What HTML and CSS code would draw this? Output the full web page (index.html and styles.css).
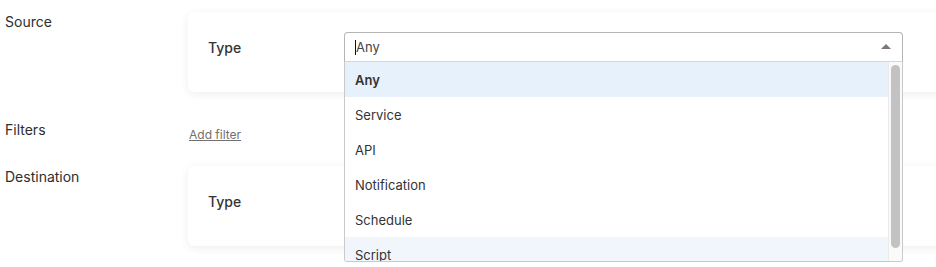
FILE: index.html
```html
<!DOCTYPE html>
<html lang="en">
<head>
    <meta charset="UTF-8">
    <title>Route editor</title>
    <link rel="stylesheet" href="styles.css">
</head>
<body>
    <div class="form">
        <div class="row row-source">
            <div class="row-label">Source</div>
            <div class="card">
                <div class="field">
                    <div class="field-label">Type</div>
                    <div class="combo">
                        <div class="combo-input">
                            <span class="caret"></span>Any
                            <span class="arrow"></span>
                        </div>
                        <div class="combo-menu">
                            <div class="combo-options">
                                <div class="option selected">Any</div>
                                <div class="option">Service</div>
                                <div class="option">API</div>
                                <div class="option">Notification</div>
                                <div class="option">Schedule</div>
                                <div class="option hover">Script</div>
                            </div>
                            <div class="scrollbar"><div class="thumb"></div></div>
                        </div>
                    </div>
                </div>
            </div>
        </div>

        <div class="row row-filters">
            <div class="row-label">Filters</div>
            <div class="row-body">
                <a class="add-link" href="#">Add filter</a>
            </div>
        </div>

        <div class="row row-destination">
            <div class="row-label">Destination</div>
            <div class="card">
                <div class="field">
                    <div class="field-label">Type</div>
                </div>
            </div>
        </div>
    </div>
</body>
</html>
```

FILE: styles.css
```css
* {
    margin: 0;
    padding: 0;
    box-sizing: border-box;
    font-family: 'Inter', 'Liberation Sans', sans-serif;
}

body {
    background-color: #ffffff;
    color: #2e2e2e;
    overflow: hidden;
    width: 936px;
    height: 267px;
}

.form {
    padding: 12px 0 0 5px;
}

.row {
    display: grid;
    grid-template-columns: 183px 780px;
}

.row-label {
    font-size: 14px;
    line-height: 20px;
    color: #2e2e2e;
}

.row-filters {
    margin-top: 28px;
}

.row-filters .row-body {
    padding-top: 4px;
    line-height: 18px;
}

.row-destination {
    margin-top: 23px;
}

.card {
    background: #ffffff;
    border-radius: 6px;
    box-shadow: 0 2px 10px rgba(0, 0, 0, 0.07);
    padding: 20px 20px 30px;
    height: 80px;
}

.row-destination .card {
    margin-top: -1px;
}

.field {
    display: flex;
    align-items: center;
    height: 30px;
}

.field-label {
    width: 136px;
    font-size: 14px;
    font-weight: 500;
    color: #333;
}

.combo {
    position: relative;
    width: 559px;
}

.combo-input {
    position: relative;
    height: 30px;
    border: 1px solid #b5b5b5;
    border-bottom-color: #d6d6d6;
    border-radius: 4px 4px 0 0;
    padding: 0 10px;
    font-size: 13px;
    line-height: 28px;
    color: #444;
    background: #fff;
}

.caret {
    display: inline-block;
    width: 1px;
    height: 15px;
    background: #111;
    vertical-align: -3px;
}

.arrow {
    position: absolute;
    right: 11px;
    top: 11px;
    width: 0;
    height: 0;
    border-left: 5px solid transparent;
    border-right: 5px solid transparent;
    border-bottom: 5px solid #7a7a7a;
}

.combo-menu {
    position: absolute;
    left: 0;
    right: 0;
    top: 30px;
    height: 200px;
    display: flex;
    background: #fff;
    border: 1px solid #c9c9c9;
    border-top: none;
    border-radius: 0 0 3px 3px;
    overflow: hidden;
    z-index: 2;
}

.combo-options {
    flex: 1;
}

.option {
    height: 35px;
    line-height: 36px;
    padding: 0 10px;
    font-size: 13px;
    color: #333;
}

.option.selected {
    background: #e6f1fb;
    font-weight: 600;
}

.option.hover {
    background: #f1f6fc;
}

.scrollbar {
    width: 14px;
    border-left: 1px solid #ebebeb;
    background: #fafafa;
    padding: 3px 2px 0 2px;
}

.thumb {
    height: 183px;
    background: #c2c2c2;
    border-radius: 5px;
}

.add-link {
    font-size: 12px;
    color: #707070;
    text-decoration: underline;
    margin-left: 1px;
}
```
